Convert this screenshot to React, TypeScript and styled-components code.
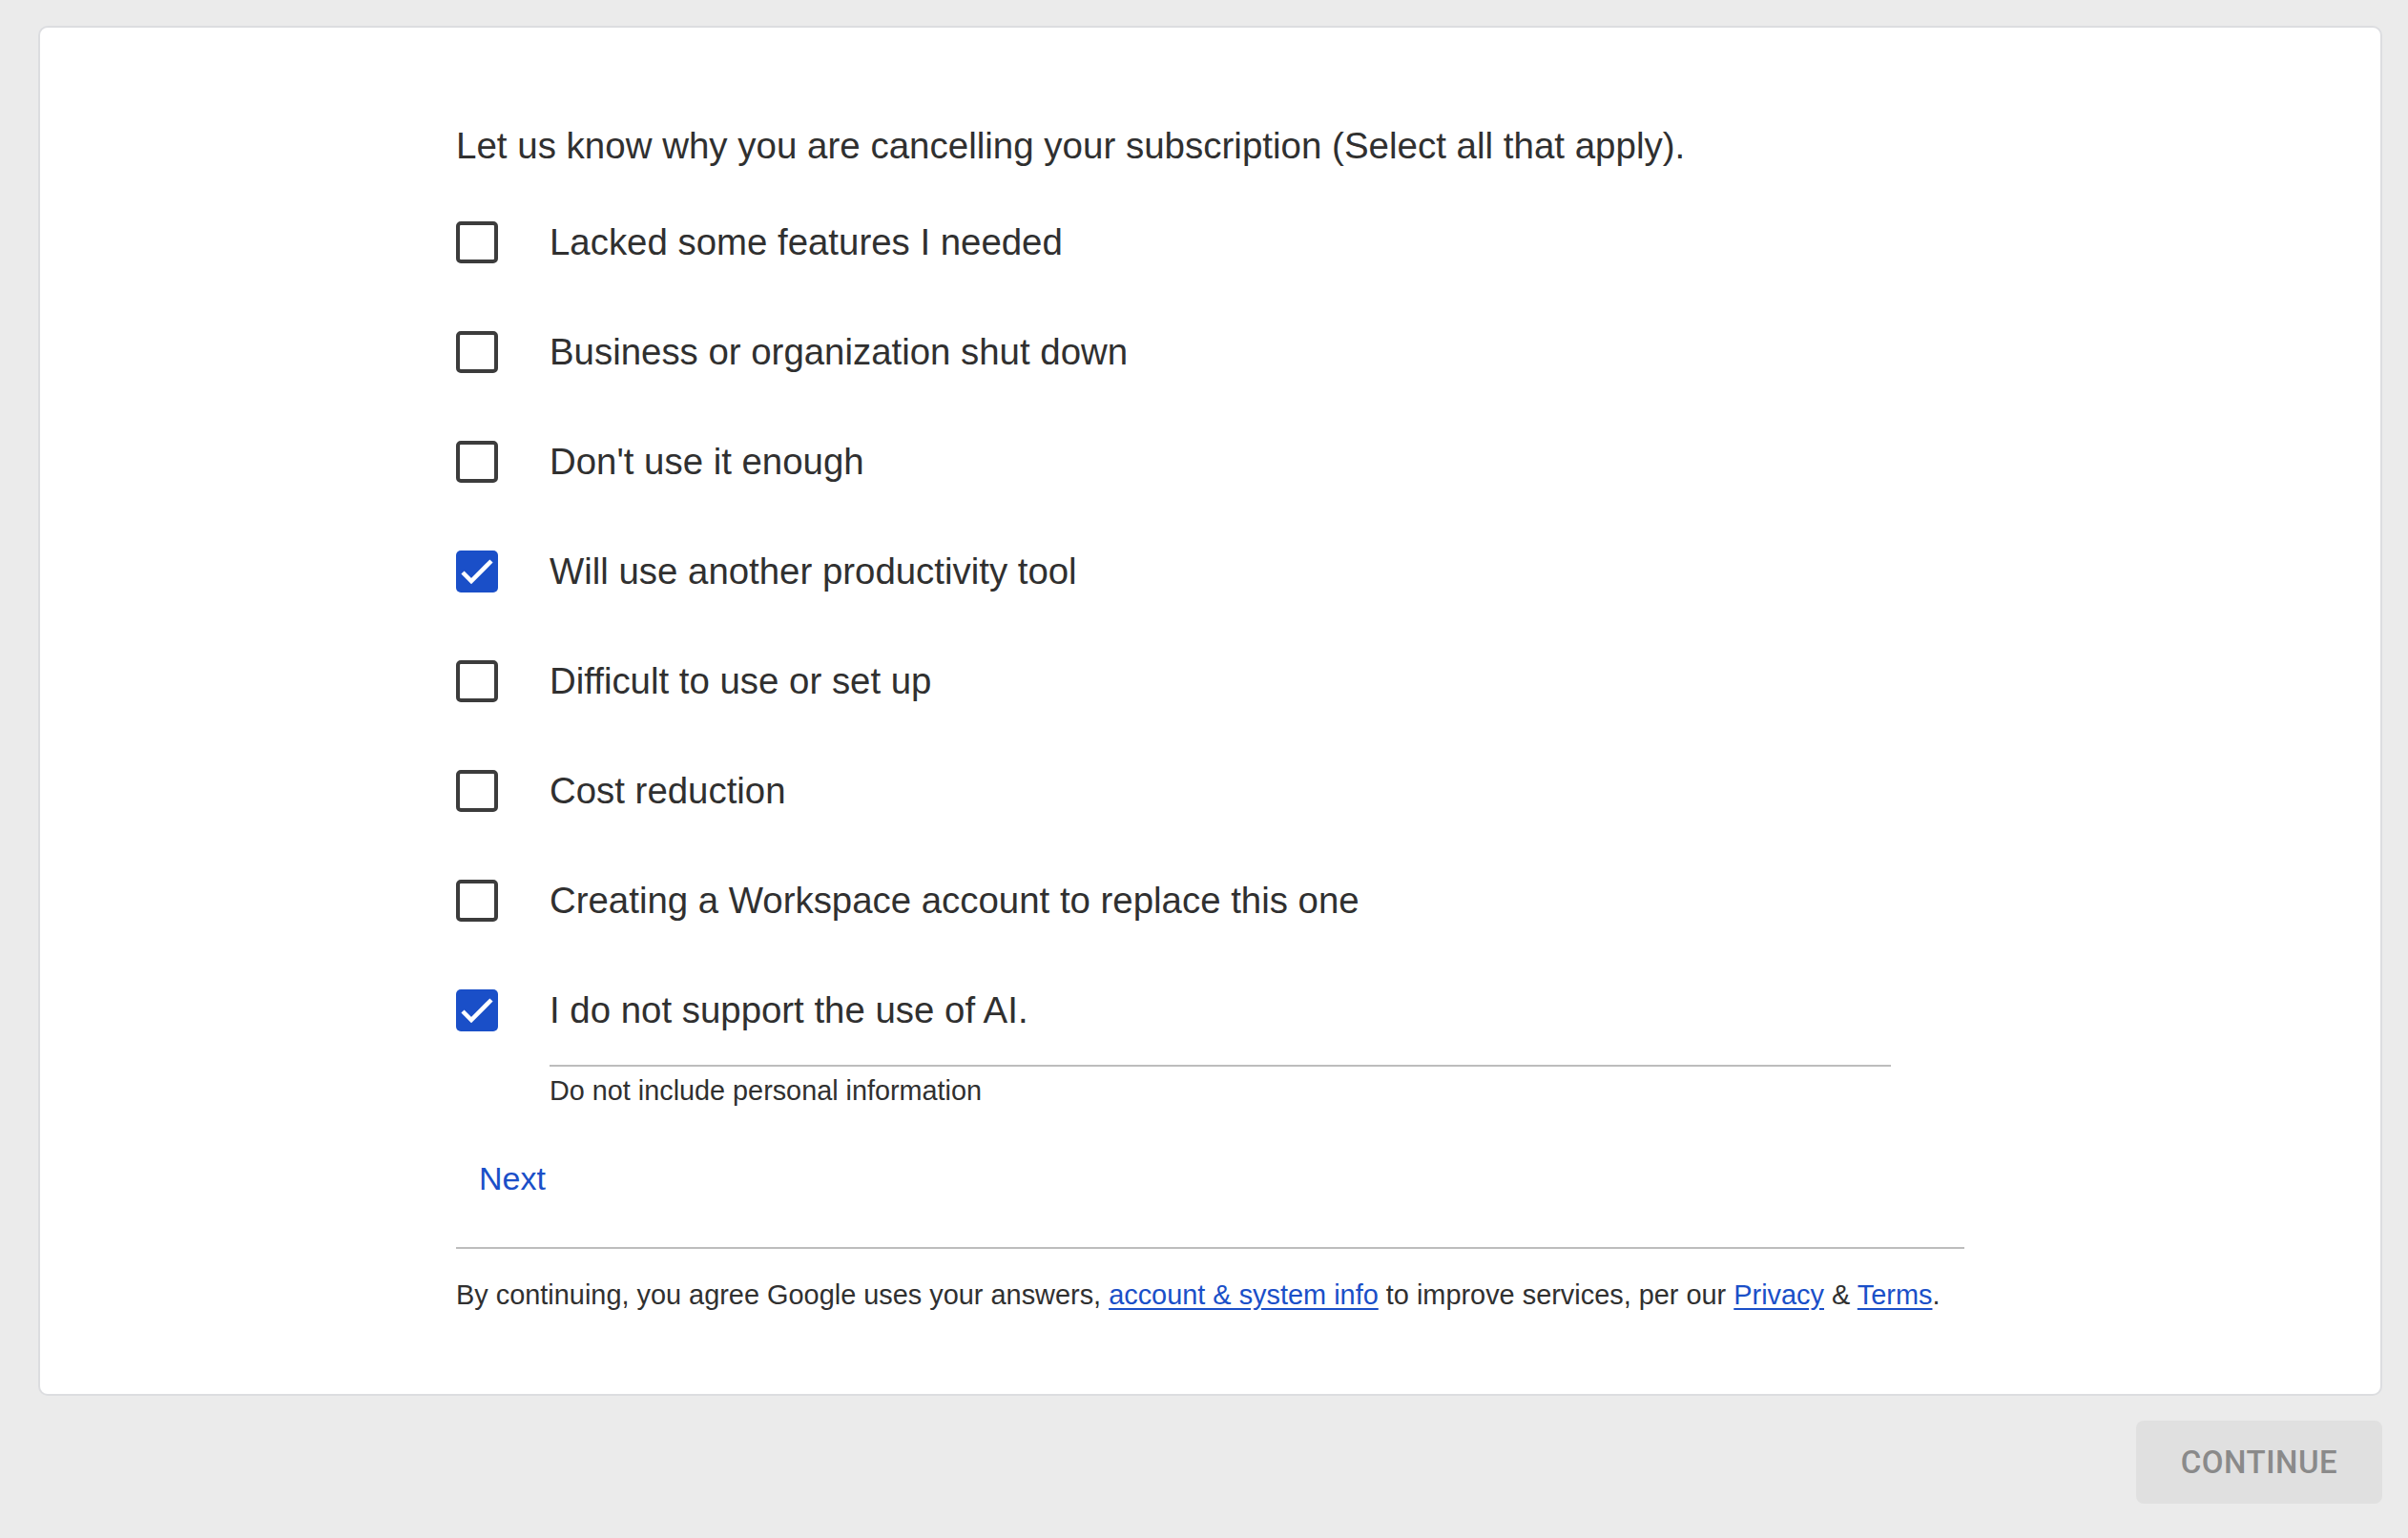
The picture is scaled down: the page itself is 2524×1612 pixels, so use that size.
import React, { useState } from 'react';
import styled, { createGlobalStyle } from 'styled-components';

const GlobalStyle = createGlobalStyle`
  html, body {
    margin: 0;
    padding: 0;
    background: #ebebeb;
    min-height: 100%;
  }
  body {
    font-family: "Liberation Sans", Arial, sans-serif;
    color: #303030;
  }
`;

const Page = styled.div`
  min-height: 1612px;
  box-sizing: border-box;
  padding: 27px 27px 0 40px;
  display: flex;
  flex-direction: column;
`;

const Card = styled.div`
  background: #fff;
  border: 2px solid #dcdde0;
  border-radius: 10px;
  padding: 101px 0 87px;
`;

const Content = styled.div`
  width: 1581px;
  margin: 0 auto;
  display: flex;
  flex-direction: column;
`;

const Heading = styled.div`
  font-size: 38.5px;
  line-height: 46px;
  color: #303030;
  margin-bottom: 20px;
`;

const Options = styled.div`
  display: flex;
  flex-direction: column;
`;

const Row = styled.label`
  height: 115px;
  display: flex;
  align-items: center;
  cursor: pointer;
`;

const Box = styled.span<{ $checked: boolean }>`
  width: 44px;
  height: 44px;
  box-sizing: border-box;
  border-radius: 5px;
  border: ${p => (p.$checked ? 'none' : '4.5px solid #3c3c3c')};
  background: ${p => (p.$checked ? '#1a4fc8' : '#fff')};
  display: flex;
  align-items: center;
  justify-content: center;
  flex-shrink: 0;
`;

const Label = styled.span`
  margin-left: 54px;
  font-size: 38.4px;
  line-height: 46px;
  color: #303030;
`;

const Underline = styled.div`
  margin-left: 98px;
  width: 1406px;
  height: 2px;
  background: #bdbdbd;
`;

const Hint = styled.div`
  margin: 8px 0 0 98px;
  font-size: 28.8px;
  line-height: 34px;
  color: #303030;
`;

const NextButton = styled.button`
  align-self: flex-start;
  margin-top: 43px;
  height: 64px;
  padding: 0 21px 0 24px;
  border: none;
  background: none;
  font-family: "Liberation Sans", Arial, sans-serif;
  font-size: 34px;
  color: #1a4fc8;
  cursor: pointer;
`;

const Divider = styled.div`
  margin-top: 40px;
  height: 2px;
  background: #bdbdbd;
`;

const Legal = styled.div`
  margin-top: 31px;
  font-size: 28.9px;
  line-height: 34px;
  color: #303030;

  a {
    color: #1a4fc8;
    text-decoration: underline;
    text-underline-offset: 4px;
  }
`;

const Actions = styled.div`
  display: flex;
  justify-content: flex-end;
  margin-top: 26px;
`;

const ContinueButton = styled.button`
  width: 258px;
  height: 87px;
  border: none;
  border-radius: 8px;
  background: #e0e0e0;
  color: #8a8a8a;
  font-family: Roboto, "Liberation Sans", sans-serif;
  font-weight: 500;
  font-size: 33px;
  letter-spacing: 0.5px;
  text-transform: uppercase;
`;

const reasons = [
  'Lacked some features I needed',
  'Business or organization shut down',
  "Don't use it enough",
  'Will use another productivity tool',
  'Difficult to use or set up',
  'Cost reduction',
  'Creating a Workspace account to replace this one',
  'I do not support the use of AI.',
];

const App: React.FC = () => {
  const [selected, setSelected] = useState<number[]>([3, 7]);

  const toggle = (i: number) => {
    setSelected(s => (s.includes(i) ? s.filter(x => x !== i) : [...s, i]));
  };

  return (
    <>
      <GlobalStyle />
      <Page>
        <Card>
          <Content>
            <Heading>Let us know why you are cancelling your subscription (Select all that apply).</Heading>
            <Options>
              {reasons.map((r, i) => {
                const checked = selected.includes(i);
                return (
                  <Row key={r} onClick={() => toggle(i)}>
                    <Box $checked={checked}>
                      {checked && (
                        <svg width="44" height="44" viewBox="0 0 44 44">
                          <polyline points="7,23 16,32 37,11" fill="none" stroke="#fff" strokeWidth="4.5" />
                        </svg>
                      )}
                    </Box>
                    <Label>{r}</Label>
                  </Row>
                );
              })}
            </Options>
            <Underline />
            <Hint>Do not include personal information</Hint>
            <NextButton>Next</NextButton>
            <Divider />
            <Legal>
              By continuing, you agree Google uses your answers, <a href="#">account &amp; system info</a> to improve
              services, per our <a href="#">Privacy</a> &amp; <a href="#">Terms</a>.
            </Legal>
          </Content>
        </Card>
        <Actions>
          <ContinueButton disabled>Continue</ContinueButton>
        </Actions>
      </Page>
    </>
  );
};

export default App;
